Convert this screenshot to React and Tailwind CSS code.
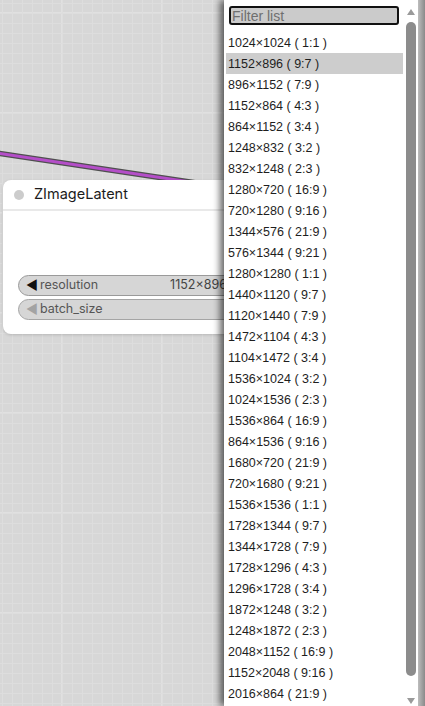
import React from "react";

const items = [
  "1024×1024 ( 1:1 )",
  "1152×896 ( 9:7 )",
  "896×1152 ( 7:9 )",
  "1152×864 ( 4:3 )",
  "864×1152 ( 3:4 )",
  "1248×832 ( 3:2 )",
  "832×1248 ( 2:3 )",
  "1280×720 ( 16:9 )",
  "720×1280 ( 9:16 )",
  "1344×576 ( 21:9 )",
  "576×1344 ( 9:21 )",
  "1280×1280 ( 1:1 )",
  "1440×1120 ( 9:7 )",
  "1120×1440 ( 7:9 )",
  "1472×1104 ( 4:3 )",
  "1104×1472 ( 3:4 )",
  "1536×1024 ( 3:2 )",
  "1024×1536 ( 2:3 )",
  "1536×864 ( 16:9 )",
  "864×1536 ( 9:16 )",
  "1680×720 ( 21:9 )",
  "720×1680 ( 9:21 )",
  "1536×1536 ( 1:1 )",
  "1728×1344 ( 9:7 )",
  "1344×1728 ( 7:9 )",
  "1728×1296 ( 4:3 )",
  "1296×1728 ( 3:4 )",
  "1872×1248 ( 3:2 )",
  "1248×1872 ( 2:3 )",
  "2048×1152 ( 16:9 )",
  "1152×2048 ( 9:16 )",
  "2016×864 ( 21:9 )",
];

export default function App() {
  return (
    <div className="relative w-[425px] h-[706px] overflow-hidden bg-[#d7d7d7] bg-[image:linear-gradient(to_right,#dddddd_1px,transparent_1px),linear-gradient(to_bottom,#dddddd_1px,transparent_1px),linear-gradient(to_right,#e0e0e0_2px,transparent_2px),linear-gradient(to_bottom,#e0e0e0_2px,transparent_2px)] bg-[size:10px_10px,10px_10px,100px_100px,100px_100px] bg-[position:2px_3px,2px_3px,61px_12px,61px_12px]">
      {/* link */}
      <svg className="absolute left-0 top-0" width="425" height="706">
        <line x1="-10" y1="152" x2="230" y2="188" stroke="#4f4f4f" strokeWidth="5.5" />
        <line x1="-10" y1="152" x2="230" y2="188" stroke="#b44ec8" strokeWidth="3" />
      </svg>

      {/* node */}
      <div className="absolute left-[3px] top-[180px] w-[280px] h-[154px] rounded-[8px] bg-white shadow-[0_1px_3px_rgba(0,0,0,0.15)] font-['Inter',sans-serif]">
        <div className="flex items-center h-[31px] border-b-2 border-[#e9e9e9]">
          <div className="ml-[11px] w-[10px] h-[10px] rounded-full bg-[#cccccc]" />
          <span className="ml-[10px] text-[14.5px] text-[#1c1c1c] leading-none">ZImageLatent</span>
        </div>
        <div className="flex flex-col gap-[3px] pt-[64px] pl-[15px]">
          <div className="flex items-center h-[21px] w-[270px] rounded-full border border-[#9a9a9a] bg-[#d6d6d6] text-[12.5px]">
            <span className="ml-[7px] text-[13px] text-[#111] leading-none">◀</span>
            <span className="ml-[2px] text-[#555]">resolution</span>
            <span className="ml-auto mr-[60px] text-[#444]">1152×896</span>
          </div>
          <div className="flex items-center h-[21px] w-[270px] rounded-full border border-[#a5a5a5] bg-[#d6d6d6] text-[12.5px]">
            <span className="ml-[7px] text-[13px] text-[#a3a3a3] leading-none">◀</span>
            <span className="ml-[2px] text-[#555]">batch_size</span>
          </div>
        </div>
      </div>

      {/* dropdown */}
      <div className="absolute left-[224px] top-0 w-[201px] h-[706px] bg-white shadow-[-4px_0_7px_rgba(0,0,0,0.6)] flex font-['Liberation_Sans',Arial,sans-serif]">
        <div className="flex flex-col w-[179px]">
          <div className="mt-[6px] ml-[5px] h-[19px] w-[170px] rounded-[3px] border-2 border-[#111] bg-[#cbcbcb] flex items-center px-[1px] text-[14px] text-[#6f6f6f] leading-none">
            Filter list
          </div>
          <div className="mt-[7px] ml-[2px] flex flex-col">
            {items.map((t, i) => (
              <div
                key={t}
                className={
                  "h-[21px] flex items-center pl-[2px] pt-[1px] text-[12.5px] text-[#1e1e1e] " +
                  (i === 1 ? "bg-[#cdcdcd]" : "")
                }
              >
                {t}
              </div>
            ))}
          </div>
        </div>
        <div className="flex flex-col items-center w-[14px] ml-[1px]">
          <svg width="10" height="8" className="mt-[8px]" viewBox="0 0 10 8">
            <polygon points="5,1 9,7 1,7" fill="#9a9a9a" />
          </svg>
          <div className="mt-[6px] w-[10px] h-[654px] rounded-full bg-[#8c8c8c]" />
          <svg width="10" height="8" className="mt-[21px]" viewBox="0 0 10 8">
            <polygon points="1,1 9,1 5,7" fill="#9a9a9a" />
          </svg>
        </div>
        <div className="ml-auto w-[7px] h-full bg-[linear-gradient(to_right,#bdbdbd,#8a8a8a)]" />
      </div>
    </div>
  );
}
